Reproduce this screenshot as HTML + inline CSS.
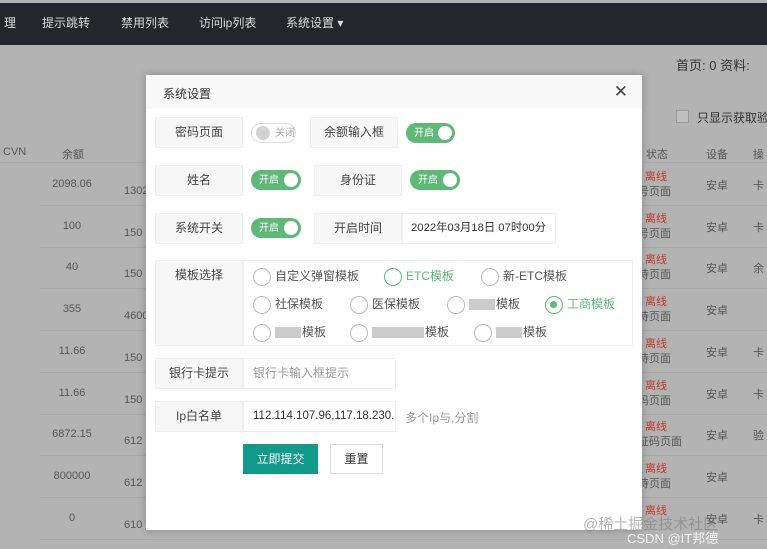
<!DOCTYPE html>
<html><head><meta charset="utf-8"><style>
*{box-sizing:border-box;margin:0;padding:0}
body{width:767px;height:549px;overflow:hidden;position:relative;background:#b3b3b3;font-family:"Liberation Sans","Noto Sans CJK SC",sans-serif;font-size:12px;color:#333}
.nav{position:absolute;left:0;top:3px;width:767px;height:42px;background:#23262b;color:#ddd;font-size:12px}
.nav span{position:absolute;top:11px}
.a{position:absolute;white-space:nowrap}
.bg{color:#555;font-size:11px;text-align:center}
.red{color:#c0392b;font-size:11px}
.modal{position:absolute;left:146px;top:75px;width:496px;height:455px;background:#fff;box-shadow:0 0 8px rgba(0,0,0,.25)}
.hd{height:34px;background:#f8f8f8;padding:10px 0 0 17px;font-size:12px;color:#333}
.x{position:absolute;right:14px;top:7px;font-size:17px;color:#444}
.lb{position:absolute;background:#f7f7f7;border:1px solid #eee;text-align:center;font-size:12px;color:#444;line-height:29px;white-space:nowrap}
.tg{position:absolute;height:20px;border-radius:10px;background:#5fb878;color:#fff;font-size:10px;padding-left:8px;line-height:21px;white-space:nowrap}
.tg:after{content:"";position:absolute;right:3px;top:3px;width:14px;height:14px;border-radius:50%;background:#fff}
.off{background:#fff;border:1px solid #ddd;color:#aaa;padding-left:23px;line-height:19px}
.off:after{left:4px;right:auto;top:2px;background:#d2d2d2}
.inp{position:absolute;background:#fff;border:1px solid #eee;font-size:12px;padding-left:9px;line-height:29px;white-space:nowrap;overflow:hidden}
.r{position:absolute;font-size:12px;color:#555;padding-left:22px;line-height:16px;white-space:nowrap}
.r:before{content:"";position:absolute;left:0;top:0;width:16px;height:16px;border:1px solid #bbb;border-radius:50%}
.g{color:#5fb878}.g:before{border-color:#5fb878}
.ck:after{content:"";position:absolute;left:5px;top:5px;width:7px;height:7px;border-radius:50%;background:#5fb878}
.blur{display:inline-block;width:26px;height:11px;background:#ccc;vertical-align:middle;margin-right:1px}
</style></head><body>
<div class="nav"><span style="left:4px">理</span><span style="left:42px">提示跳转</span><span style="left:121px">禁用列表</span><span style="left:199px">访问ip列表</span><span style="left:286px">系统设置 ▾</span></div>
<div class="a" style="left:676px;top:55px;font-size:13px;color:#333">首页: 0 资料:</div>
<div class="a" style="left:676px;top:110px;width:13px;height:13px;border:1px solid #999;background:#c0c0c0"></div>
<div class="a" style="left:697px;top:109px;font-size:12px">只显示获取验</div>
<div class="a bg" style="left:3px;top:146px">CVN</div><div class="a bg" style="left:62px;top:146px">余额</div>
<div class="a bg" style="left:646px;top:146px">状态</div><div class="a bg" style="left:706px;top:146px">设备</div><div class="a bg" style="left:753px;top:146px">操</div>
<div class="a" style="left:0;top:162px;width:767px;height:1px;background:#aaa"></div>
<div id="rows"></div>
<script>
var v=["2098.06","100","40","355","11.66","11.66","6872.15","800000","0"],p=["1302","150","150","4600","150","150","612","612","610"],s=["号页面","号页面","待页面","待页面","待页面","码页面","证码页面","待页面",""],o=["卡","卡","余","","卡","卡","验","","卡"];
var h="";for(var i=0;i<9;i++){var y=165+i*41.7;h+='<div class="a bg" style="left:40px;width:64px;top:'+(y+13)+'px">'+v[i]+'</div><div class="a bg" style="left:124px;top:'+(y+20)+'px">'+p[i]+'</div><div class="a red" style="left:645px;top:'+(y+3)+'px">离线</div><div class="a bg" style="left:638px;top:'+(y+18)+'px">'+s[i]+'</div><div class="a bg" style="left:706px;top:'+(y+12)+'px">安卓</div><div class="a bg" style="left:753px;top:'+(y+12)+'px">'+o[i]+'</div><div class="a" style="left:40px;top:'+(y+40)+'px;width:727px;height:1px;background:#a8a8a8"></div>';}
document.getElementById("rows").innerHTML=h;
</script>
<div class="modal">
<div class="hd">系统设置</div><div class="x">✕</div>
<div class="lb" style="left:9px;top:42px;width:88px;height:31px">密码页面</div>
<div class="tg off" style="left:105px;top:48px;width:45px">关闭</div>
<div class="lb" style="left:164px;top:42px;width:88px;height:31px">余额输入框</div>
<div class="tg" style="left:260px;top:48px;width:49px">开启</div>
<div class="lb" style="left:9px;top:90px;width:88px;height:31px">姓名</div>
<div class="tg" style="left:105px;top:95px;width:50px">开启</div>
<div class="lb" style="left:168px;top:90px;width:88px;height:31px">身份证</div>
<div class="tg" style="left:264px;top:95px;width:50px">开启</div>
<div class="lb" style="left:9px;top:138px;width:88px;height:31px">系统开关</div>
<div class="tg" style="left:105px;top:143px;width:50px">开启</div>
<div class="lb" style="left:168px;top:138px;width:88px;height:31px">开启时间</div>
<div class="inp" style="left:256px;top:138px;width:154px;height:31px;font-size:11.3px;padding-left:8px">2022年03月18日 07时00分</div>
<div class="lb" style="left:9px;top:185px;width:88px;height:86px">模板选择</div>
<div class="inp" style="left:97px;top:185px;width:390px;height:86px"></div>
<div class="r" style="left:107px;top:193px">自定义弹窗模板</div>
<div class="r g" style="left:238px;top:193px">ETC模板</div>
<div class="r" style="left:335px;top:193px">新-ETC模板</div>
<div class="r" style="left:107px;top:221px">社保模板</div>
<div class="r" style="left:204px;top:221px">医保模板</div>
<div class="r" style="left:301px;top:221px"><span class="blur"></span>模板</div>
<div class="r g ck" style="left:399px;top:221px">工商模板</div>
<div class="r" style="left:107px;top:249px"><span class="blur"></span>模板</div>
<div class="r" style="left:204px;top:249px"><span class="blur" style="width:52px"></span>模板</div>
<div class="r" style="left:328px;top:249px"><span class="blur"></span>模板</div>
<div class="lb" style="left:9px;top:283px;width:88px;height:31px">银行卡提示</div>
<div class="inp" style="left:97px;top:283px;width:153px;height:31px;color:#999">银行卡输入框提示</div>
<div class="lb" style="left:9px;top:326px;width:88px;height:31px">Ip白名单</div>
<div class="inp" style="left:97px;top:326px;width:153px;height:31px;font-size:11.5px">112.114.107.96,117.18.230.1</div>
<div class="a" style="left:259px;top:334px;color:#999">多个Ip与,分割</div>
<div class="a" style="left:97px;top:369px;width:75px;height:30px;background:#13998a;color:#fff;font-size:12px;text-align:center;line-height:30px">立即提交</div>
<div class="a" style="left:184px;top:369px;width:53px;height:30px;border:1px solid #ddd;font-size:12px;text-align:center;line-height:28px">重置</div>
</div>
<div class="a" style="left:583px;top:513px;font-size:15px;color:rgba(120,120,120,.55)">@稀土掘金技术社区</div>
<div class="a" style="left:627px;top:528px;font-size:13px;color:rgba(255,255,255,.85)">CSDN @IT邦德</div>
</body></html>
